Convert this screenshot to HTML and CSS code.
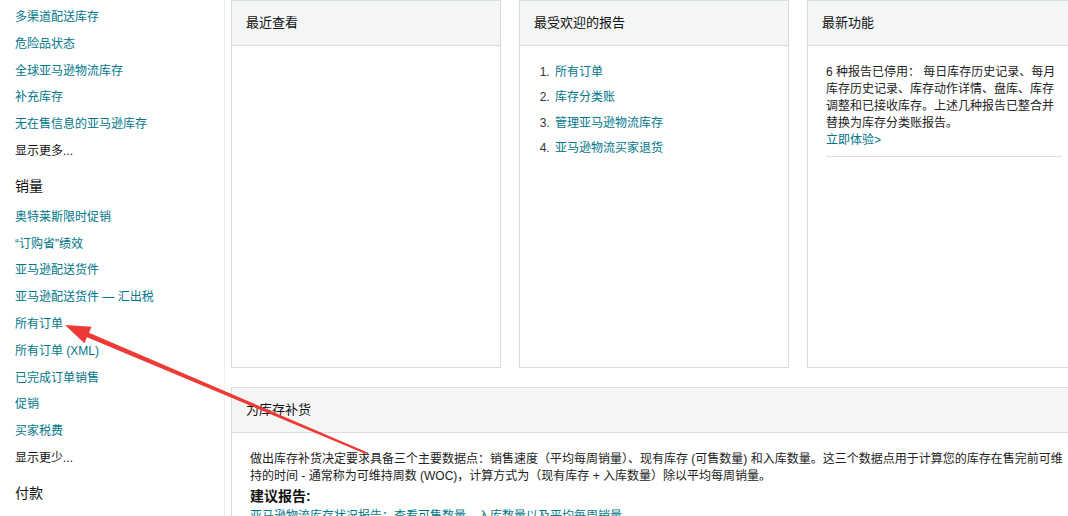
FILE: index.html
```html
<!DOCTYPE html>
<html lang="zh-CN">
  <head>
    <meta charset="UTF-8" />
    <title>库存报告</title>
    <link rel="stylesheet" href="styles.css">
  </head>
  <body>
    <div class="page">
      <div class="sidebar">
        <a class="nav-link" href="#">多渠道配送库存</a>
        <a class="nav-link" href="#">危险品状态</a>
        <a class="nav-link" href="#">全球亚马逊物流库存</a>
        <a class="nav-link" href="#">补充库存</a>
        <a class="nav-link" href="#">无在售信息的亚马逊库存</a>
        <a class="nav-more" href="#">显示更多...</a>
        <div class="nav-title">销量</div>
        <a class="nav-link" href="#">奥特莱斯限时促销</a>
        <a class="nav-link" href="#">“订购省”绩效</a>
        <a class="nav-link" href="#">亚马逊配送货件</a>
        <a class="nav-link" href="#">亚马逊配送货件 — 汇出税</a>
        <a class="nav-link" href="#">所有订单</a>
        <a class="nav-link" href="#">所有订单 (XML)</a>
        <a class="nav-link" href="#">已完成订单销售</a>
        <a class="nav-link" href="#">促销</a>
        <a class="nav-link" href="#">买家税费</a>
        <a class="nav-more" href="#">显示更少...</a>
        <div class="nav-title">付款</div>
      </div>

      <div class="main">
        <div class="card-row">
          <div class="card">
            <div class="card-head">最近查看</div>
            <div class="card-body"></div>
          </div>
          <div class="card">
            <div class="card-head">最受欢迎的报告</div>
            <ol class="top-list">
              <li><a href="#">所有订单</a></li>
              <li><a href="#">库存分类账</a></li>
              <li><a href="#">管理亚马逊物流库存</a></li>
              <li><a href="#">亚马逊物流买家退货</a></li>
            </ol>
          </div>
          <div class="card">
            <div class="card-head">最新功能</div>
            <div class="news">
              <p>6 种报告已停用： 每日库存历史记录、每月库存历史记录、库存动作详情、盘库、库存调整和已接收库存。上述几种报告已整合并替换为库存分类账报告。</p>
              <a href="#">立即体验&gt;</a>
            </div>
          </div>
        </div>

        <div class="card wide">
          <div class="card-head">为库存补货</div>
          <div class="wide-body">
            <p>做出库存补货决定要求具备三个主要数据点：销售速度（平均每周销量）、现有库存 (可售数量) 和入库数量。这三个数据点用于计算您的库存在售完前可维持的时间 - 通常称为可维持周数 (WOC)，计算方式为（现有库存 + 入库数量）除以平均每周销量。</p>
            <h4>建议报告:</h4>
            <a href="#">亚马逊物流库存状况报告：查看可售数量、入库数量以及平均每周销量</a>
          </div>
        </div>
      </div>
    </div>

    <!-- annotation arrow drawn over the screenshot -->
    <svg class="arrow" width="1068" height="516" viewBox="0 0 1068 516">
      <polygon fill="#ee3a36" points="366.4,452.1 89,332.7 91.6,326.7 65,325 84.4,343.3 87,337.3 365.6,453.9" />
    </svg>
  </body>
</html>
```

FILE: styles.css
```css
body {
  margin: 0;
  font-family: "Liberation Sans", "Noto Sans CJK SC", sans-serif;
  font-size: 12px;
  color: #111;
  background: #fff;
  overflow: hidden;
}
a {
  text-decoration: none;
  color: #00768a;
}
.page {
  display: flex;
  height: 516px;
}

.sidebar {
  width: 225px;
  flex-shrink: 0;
  border-right: 1px solid #f0f0f0;
  padding: 4px 0 0 15px;
  box-sizing: border-box;
}
.nav-link,
.nav-more {
  display: block;
  line-height: 26.8px;
  white-space: nowrap;
}
.nav-more {
  color: #111;
}
.nav-title {
  font-size: 14px;
  line-height: 28px;
  margin: 7px 0 4px;
  color: #111;
}

.main {
  flex: 1;
  padding-left: 6px;
  overflow: hidden;
}
.card-row {
  display: flex;
  gap: 18px;
  width: 850px;
}
.card {
  width: 270px;
  height: 368px;
  border: 1px solid #d8dcdc;
  box-sizing: border-box;
  flex-shrink: 0;
}
.card-head {
  height: 44px;
  line-height: 44px;
  background: #f4f6f6;
  border-bottom: 1px solid #d8dcdc;
  padding-left: 14px;
  font-size: 13px;
  color: #0f1111;
}

.top-list {
  margin: 0;
  padding: 14px 0 0 33px;
}
.top-list li {
  line-height: 25.3px;
  color: #333;
  padding-left: 2px;
}

.news {
  padding: 18px 14px 0 18px;
}
.news p {
  margin: 0;
  line-height: 17px;
  color: #222;
}
.news a {
  display: block;
  line-height: 17px;
  padding-bottom: 7px;
  border-bottom: 1px solid #dcdcdc;
}

.card.wide {
  width: 850px;
  height: auto;
  margin-top: 19px;
}
.wide-body {
  padding: 18px 12px 0 18px;
}
.wide-body p {
  margin: 0;
  line-height: 17px;
  color: #222;
}
.wide-body h4 {
  margin: 1px 0 0;
  font-size: 14px;
  line-height: 20px;
  font-weight: bold;
}
.wide-body a {
  display: block;
  line-height: 20px;
  white-space: nowrap;
}

.arrow {
  position: absolute;
  left: 0;
  top: 0;
  pointer-events: none;
}
```
